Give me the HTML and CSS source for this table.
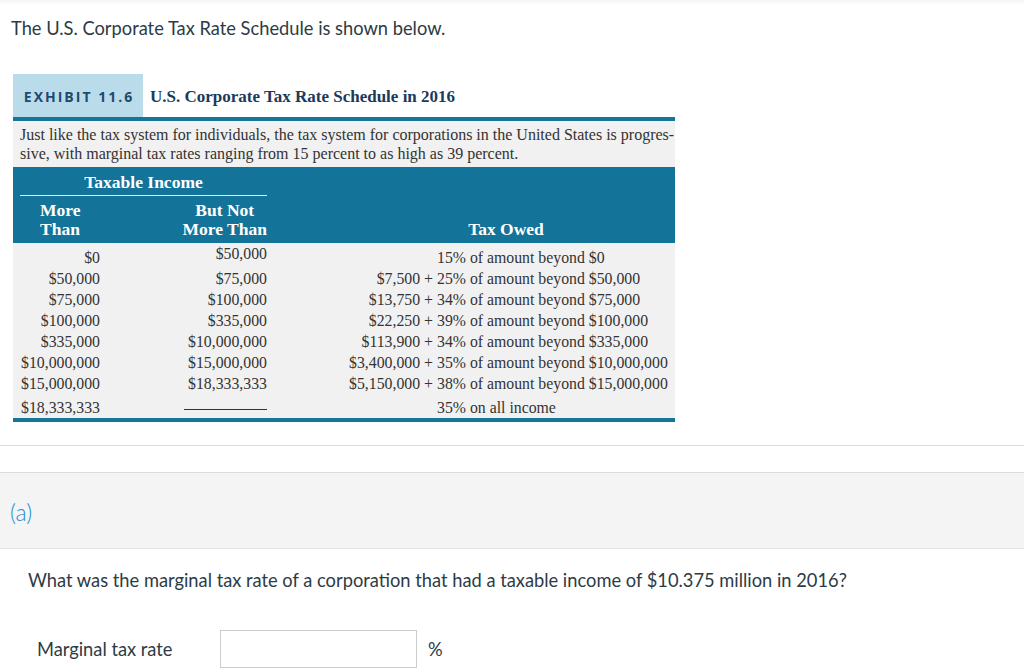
FILE: index.html
```html
<!DOCTYPE html>
<html>
<head>
<meta charset="utf-8">
<link rel="stylesheet" href="styles.css">
</head>
<body>
<div class="top-shadow"></div>
<div class="question">
  <p class="intro">The U.S. Corporate Tax Rate Schedule is shown below.</p>
  <div class="exhibit">
    <div class="ex-head">
      <span class="ex-tab">EXHIBIT 11.6</span>
      <span class="ex-title">U.S. Corporate Tax Rate Schedule in 2016</span>
    </div>
    <div class="ex-desc">Just like the tax system for individuals, the tax system for corporations in the United States is progres-<br>sive, with marginal tax rates ranging from 15 percent to as high as 39 percent.</div>
    <table class="ex-table">
      <colgroup>
        <col class="c1"><col class="c2"><col class="c3a"><col class="c3b">
      </colgroup>
      <thead>
        <tr class="hr1">
          <th colspan="2"><span class="ti">Taxable Income</span></th>
          <th colspan="2"></th>
        </tr>
        <tr class="hr2">
          <th class="h-more">More<br>Than</th>
          <th class="h-but"><span class="stack">But Not<br>More Than</span></th>
          <th colspan="2" class="h-tax">Tax Owed</th>
        </tr>
      </thead>
      <tbody>
        <tr class="first"><td>$0</td><td class="up">$50,000</td><td class="pre"></td><td>15% of amount beyond $0</td></tr>
        <tr><td>$50,000</td><td>$75,000</td><td class="pre">$7,500 +</td><td>25% of amount beyond $50,000</td></tr>
        <tr><td>$75,000</td><td>$100,000</td><td class="pre">$13,750 +</td><td>34% of amount beyond $75,000</td></tr>
        <tr><td>$100,000</td><td>$335,000</td><td class="pre">$22,250 +</td><td>39% of amount beyond $100,000</td></tr>
        <tr><td>$335,000</td><td>$10,000,000</td><td class="pre">$113,900 +</td><td>34% of amount beyond $335,000</td></tr>
        <tr><td>$10,000,000</td><td>$15,000,000</td><td class="pre">$3,400,000 +</td><td>35% of amount beyond $10,000,000</td></tr>
        <tr><td>$15,000,000</td><td>$18,333,333</td><td class="pre">$5,150,000 +</td><td>38% of amount beyond $15,000,000</td></tr>
        <tr class="last"><td>$18,333,333</td><td><span class="dash"></span></td><td class="pre"></td><td>35% on all income</td></tr>
      </tbody>
    </table>
  </div>
</div>
<div class="part-head"><span class="part-label">(a)</span></div>
<div class="part-body">
  <p class="q">What was the marginal tax rate of a corporation that had a taxable income of $10.375 million in 2016?</p>
  <div class="answer-row">
    <label class="ans-label" for="rate">Marginal tax rate</label>
    <input class="ans-input" id="rate" type="text">
    <span class="unit">%</span>
  </div>
</div>
</body>
</html>
```

FILE: styles.css
```css
html, body {
  margin: 0;
  padding: 0;
  background: #fff;
}
body {
  font-family: Lato, "Open Sans", sans-serif;
  color: #2d3b45;
  font-size: 18.3px;
  height: 669px;
  overflow: hidden;
}
.top-shadow {
  height: 0;
  box-shadow: 0 0 4px 1px rgba(0,0,0,0.12);
}
.question {
  border-bottom: 1px solid #dcdcdc;
  padding: 16px 0 23px 11px;
}
.intro {
  margin: 0;
  line-height: 24px;
}
.exhibit {
  margin: 34px 0 0 2px;
  width: 662px;
  font-family: "Liberation Serif", "Times New Roman", serif;
  color: #333;
}
.ex-head {
  display: flex;
  align-items: center;
  height: 43px;
  border-bottom: 4px solid #167599;
}
.ex-tab {
  width: 130px;
  height: 43px;
  box-sizing: border-box;
  background: #badcea;
  display: flex;
  align-items: center;
  justify-content: center;
  font-family: "Open Sans", "DejaVu Sans", sans-serif;
  font-weight: 700;
  font-size: 14px;
  letter-spacing: 2px;
  color: #1e4a6d;
  padding: 2px 0 0 2px;
}
.ex-title {
  margin-left: 7px;
  font-weight: 700;
  font-size: 17px;
  color: #1c3a5a;
  padding-top: 2px;
}
.ex-desc {
  background: #f1f1f1;
  height: 46px;
  box-sizing: border-box;
  padding: 4px 0 0 7px;
  font-size: 16px;
  line-height: 19px;
  color: #333;
  white-space: nowrap;
}
.ex-table {
  width: 662px;
  border-collapse: collapse;
  border-spacing: 0;
  table-layout: fixed;
  border-bottom: 4px solid #167599;
}
.c1 { width: 91px; }
.c2 { width: 167px; }
.c3a { width: 166px; }
.c3b { width: 238px; }
.ex-table th, .ex-table td {
  padding: 0;
}
.ex-table thead {
  background: #137398;
  color: #fff;
}
.ex-table th {
  font-weight: 700;
  font-size: 17.5px;
  white-space: nowrap;
}
.hr1 th {
  padding-top: 6px;
  height: 23px;
  vertical-align: top;
}
.ti {
  display: block;
  margin: 0 4px 0 7px;
  line-height: 18px;
  padding-bottom: 4px;
  border-bottom: 1px solid #e8eef2;
  text-align: center;
}
.hr2 th {
  line-height: 19px;
  padding: 5px 0 4px;
  vertical-align: bottom;
}
.h-more {
  text-align: left;
  padding-left: 27px !important;
}
.h-but {
  text-align: right;
  padding-right: 4px !important;
}
.stack {
  display: inline-block;
  text-align: center;
}
.h-tax {
  text-align: center;
  padding-left: 66px !important;
}
.ex-table tbody {
  background: #f1f1f1;
}
.ex-table td {
  font-size: 15.8px;
  line-height: 21px;
  color: #333;
  white-space: nowrap;
  vertical-align: top;
}
.ex-table td:nth-child(1) {
  text-align: right;
  padding-right: 4px;
}
.ex-table td:nth-child(2) {
  text-align: right;
  padding-right: 4px;
}
.ex-table td.pre {
  text-align: right;
  padding-right: 4px;
}
.ex-table td:nth-child(4) {
  text-align: left;
}
.ex-table tr.first td {
  padding-top: 4px;
}
.ex-table tr.first td.up {
  line-height: 13px;
}
.ex-table tr.last td {
  padding-top: 3px;
}
.dash {
  display: inline-block;
  width: 83px;
  height: 1px;
  background: #333;
  vertical-align: 3px;
}
.part-head {
  margin-top: 26px;
  background: #f4f4f4;
  border-top: 1px solid #dcdcdc;
  border-bottom: 1px solid #e3e3e3;
  height: 75px;
  display: flex;
  align-items: center;
  padding-left: 10px;
}
.part-label {
  color: #1a8fd6;
  font-size: 23px;
  font-weight: 300;
  padding-top: 2px;
}
.part-body {
  padding: 19px 0 0 28px;
}
.q {
  margin: 0;
  line-height: 24px;
}
.answer-row {
  display: flex;
  align-items: center;
  margin-top: 38px;
  padding-left: 9px;
}
.ans-label {
  width: 183px;
}
.ans-input {
  width: 197px;
  height: 38px;
  box-sizing: border-box;
  border: 1px solid #c7cdd1;
  border-radius: 0;
  background: #fff;
  margin: 0;
  padding: 0 8px;
  font: inherit;
}
.unit {
  margin-left: 11px;
}
```
